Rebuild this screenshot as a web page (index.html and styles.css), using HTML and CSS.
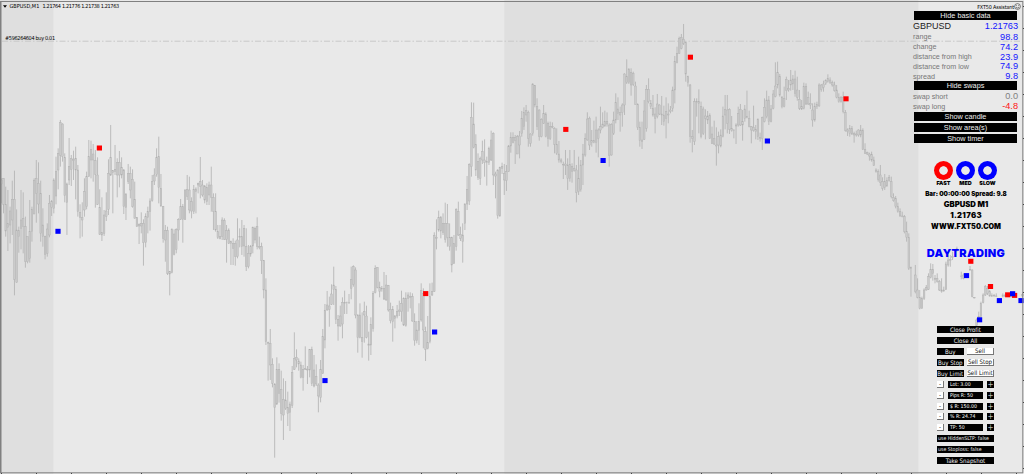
FILE: index.html
```html
<!DOCTYPE html>
<html lang="en">
<head>
    <meta charset="UTF-8">
    <meta name="viewport" content="width=device-width, initial-scale=1.0">
    <title>GBPUSD,M1</title>
    <link rel="stylesheet" href="styles.css">
</head>
<body>
    <div class="chart">
        <svg class="plot" viewBox="0 0 1024 474">
            <rect class="session" x="0" y="0" width="53.3" height="474"/>
            <rect class="session" x="504.3" y="0" width="414" height="474"/>
            <line class="order-line" x1="2" y1="41.2" x2="1022" y2="41.2"/>
            <g id="candles" transform="scale(0.33333)"></g>
            <g id="markers"></g>
            <g id="axis"></g>
        </svg>

        <div class="chart-info">
            <div class="chart-title">
                <svg class="arrow" viewBox="0 0 5 3"><path d="M0 0h5L2.5 3z"/></svg>
                <span class="symbol">GBPUSD,M1</span>
                <span class="ohlc">1.21764 1.21776 1.21738 1.21763</span>
            </div>
            <div class="order-label">#596264604 buy 0.01</div>
        </div>

        <div class="sidebar">
            <div class="expert">FXT50 Assistant
                <svg viewBox="0 0 7 7"><circle cx="3.5" cy="3.5" r="2.9"/><path d="M2.4 2.2v.9M4.6 2.2v.9M1.9 4.3q1.6 1.5 3.2 0"/></svg>
            </div>

            <div class="data">
                <button class="bar">Hide basic data</button>
                <div class="row main"><span>GBPUSD</span><b>1.21763</b></div>
                <div class="row"><span>range</span><b>98.8</b></div>
                <div class="row"><span>change</span><b>74.2</b></div>
                <div class="row"><span>distance from high</span><b>23.9</b></div>
                <div class="row"><span>distance from low</span><b>74.9</b></div>
                <div class="row"><span>spread</span><b>9.8</b></div>
                <button class="bar swaps">Hide swaps</button>
                <div class="row"><span>swap short</span><b class="zero">0.0</b></div>
                <div class="row"><span>swap long</span><b class="negative">-4.8</b></div>
                <div class="toggles">
                    <button class="bar">Show candle</button>
                    <button class="bar">Show area(s)</button>
                    <button class="bar">Show timer</button>
                </div>
            </div>

            <div class="signals">
                <div class="signal"><i class="ring red"></i>FAST</div>
                <div class="signal"><i class="ring"></i>MED</div>
                <div class="signal"><i class="ring"></i>SLOW</div>
            </div>
            <div class="summary">
                <p class="timer">Bar: 00:00:00 Spread: 9.8</p>
                <p>GBPUSD M1</p>
                <p class="price">1.21763</p>
                <p class="site">WWW.FXT50.COM</p>
            </div>
            <div class="mode">DAYTRADING</div>

            <div class="trade">
                <button>Close Profit</button>
                <button>Close All</button>
                <div class="pair"><button>Buy</button><button class="light">Sell</button></div>
                <div class="pair"><button>Buy Stop</button><button class="light">Sell Stop</button></div>
                <div class="pair"><button>Buy Limit</button><button class="light">Sell Limit</button></div>
                <div class="stepper"><button class="light">-</button><span>Lot: 3.00</span><button class="plus">+</button></div>
                <div class="stepper"><button class="light">-</button><span>Pips R: 50</span><button class="plus">+</button></div>
                <div class="stepper"><button class="light">-</button><span>$ R: 150.00</span><button class="plus">+</button></div>
                <div class="stepper"><button class="light">-</button><span>% R: 24.74</span><button class="plus">+</button></div>
                <div class="stepper"><button class="light">-</button><span>TP: 50</span><button class="plus">+</button></div>
                <button class="option">use HiddenSLTP: false</button>
                <button class="option">use Stoploss: false</button>
                <button>Take Snapshot</button>
            </div>
        </div>
    </div>

    <script src="chart.js"></script>
</body>
</html>
```
FILE: styles.css
```css
* {
    box-sizing: border-box;
}

body {
    margin: 0;
    background-color: #e9e9e9;
    font-family: "DejaVu Sans Condensed", "DejaVu Sans", sans-serif;
    color: #000;
}

.chart {
    position: relative;
    display: flex;
    justify-content: space-between;
    width: 1024px;
    height: 474px;
    overflow: hidden;
}

.plot {
    position: absolute;
    top: 0;
    left: 0;
    width: 1024px;
    height: 474px;
}

.session {
    fill: #dfdfdf;
}

.order-line {
    stroke: #c8c8c8;
    stroke-width: 1;
    stroke-dasharray: 6 2 1.5 2;
}

.wick {
    stroke: #b0b0b0;
    stroke-width: 2.4;
}

.body {
    fill: #cbcbcb;
    stroke: #b0b0b0;
    stroke-width: 1.3;
}

.sell {
    fill: #ff0000;
}

.buy {
    fill: #0000ff;
}

.frame {
    fill: #808080;
}

.tick {
    fill: #444;
}

.chart-info,
.sidebar {
    position: relative;
}

.chart-info {
    padding: 2px 0 0 3px;
    font-size: 5.5px;
    line-height: 8px;
    white-space: nowrap;
}

.chart-title {
    display: flex;
    align-items: center;
    height: 8px;
}

.arrow {
    width: 4px;
    height: 3px;
    margin-right: 2.5px;
}

.symbol {
    width: 33px;
}

.ohlc {
    letter-spacing: -0.33px;
}

.order-label {
    margin: 24px 0 0 2px;
    letter-spacing: -0.32px;
}

.sidebar {
    display: flex;
    flex-direction: column;
    width: 111px;
    padding-top: 2px;
}

button {
    display: block;
    width: 100%;
    margin: 0;
    padding: 0;
    border: 0;
    border-radius: 0;
    background-color: #000;
    color: #eee;
    font-family: inherit;
    text-align: center;
    white-space: nowrap;
}

.expert {
    display: flex;
    justify-content: flex-end;
    align-items: center;
    height: 9px;
    padding-right: 3px;
    font-size: 5.4px;
    letter-spacing: -0.13px;
    white-space: nowrap;
}

.expert svg {
    width: 7px;
    height: 7px;
    fill: none;
    stroke: #333;
    stroke-width: 0.6;
}

.data {
    width: 105px;
    font-family: "Liberation Sans", Arial, sans-serif;
}

.bar {
    width: 103px;
    height: 9px;
    margin: 0 1px;
    font-size: 7.3px;
    line-height: 9px;
}

.row {
    display: flex;
    justify-content: space-between;
    align-items: center;
    height: 9.8px;
    color: #777;
    font-size: 7.2px;
}

.row b {
    color: #1414ff;
    font-size: 9.2px;
    font-weight: normal;
}

.main {
    height: 12px;
    color: #222;
    font-size: 9px;
}

.row .zero {
    color: #808080;
}

.row .negative {
    color: #ff1414;
}

.swaps {
    margin-bottom: 1.4px;
}

.toggles {
    display: flex;
    flex-direction: column;
    gap: 2px;
    padding-top: 0.6px;
}

.signals {
    display: flex;
    gap: 3px;
    margin: 18px 0 0 21px;
    height: 26px;
}

.signal {
    display: flex;
    flex-direction: column;
    align-items: center;
    width: 19px;
    font-family: Inter, "Arial Black", sans-serif;
    font-size: 5.4px;
    font-weight: 900;
    line-height: 6px;
}

.ring {
    width: 19px;
    height: 19px;
    border-radius: 50%;
    background: radial-gradient(circle, transparent 3.9px, #0000ff 4.6px);
}

.ring.red {
    background: radial-gradient(circle, transparent 3.9px, #ff0000 4.6px);
}

.summary,
.mode {
    width: 106px;
    font-family: Inter, "Arial Black", sans-serif;
    font-weight: 900;
    text-align: center;
    white-space: nowrap;
}

.summary {
    margin-top: 1px;
}

.summary p {
    margin: 0;
    font-size: 7.7px;
    line-height: 11px;
}

.summary .timer {
    font-size: 6.15px;
}

.summary .price {
    letter-spacing: 0.3px;
}

.summary .site {
    font-size: 7.2px;
}

.mode {
    margin-top: 14px;
    color: #0000ff;
    font-size: 11px;
    line-height: 14px;
    letter-spacing: 0.3px;
}

.trade {
    display: flex;
    flex-direction: column;
    gap: 3.93px;
    width: 57px;
    margin: 66.5px 0 0 24px;
    font-size: 6px;
}

.trade button,
.trade span {
    height: 7px;
    font-size: 6.1px;
    line-height: 7px;
}

.trade .light {
    border: solid #777;
    border-width: 0 1px 1px 0;
    background-color: #fff;
    color: #111;
    line-height: 6px;
}

.pair {
    display: grid;
    grid-template-columns: 26.5px 27px;
    gap: 3.5px;
}

.stepper {
    display: grid;
    grid-template-columns: 7px 35px 7px;
    gap: 4px;
}

.trade .stepper span {
    padding-left: 2px;
    background-color: #000;
    color: #fff;
    font-size: 5.2px;
    white-space: nowrap;
}

.trade .plus {
    color: #bbb;
    font-size: 8px;
}

.trade .option {
    padding-left: 1px;
    font-size: 5.2px;
    text-align: left;
}
```
FILE: chart.js
```js
const STEP = 6.56;

// candles as [high, body top, body bottom, low], grouped by price offset
const groups = [
    { from: 0, y: 330, data: [
        [205,210,222,280],[205,205,283,310],[230,283,363,380],[240,340,352,423],[290,303,345,400],[212,268,330,375],
        [182,268,508,556],[298,360,517,518],[350,362,380,428],[240,330,355,418],[247,325,350,430],[320,350,455,473],
        [380,380,455,460],[270,365,445,458],[290,298,365,395],[205,212,312,312],[150,205,250,338],[157,220,282,310],
        [212,250,370,395],[295,345,380,410],[377,380,433,448],[340,357,430,440],[255,280,375,382],[270,275,292,318],
        [205,210,295,310],[140,185,258,283],[115,130,180,238],[30,38,136,170],[40,42,140,155],[130,142,257,277],
        [218,222,278,375],[84,170,210,225],[135,145,178,228],[122,148,152,210],[110,145,180,268],[165,180,305,320],
        [283,308,322,385],[277,322,330,380],[205,245,300,320],[185,200,290,298],[90,140,200,200],[92,118,150,205],
        [102,132,150,215],[120,152,193,293],[142,195,283,285],[238,293,373,375],[262,367,375,393],[300,315,370,378],
        [247,303,320,333],[148,190,298,315],[45,142,195,198],[180,182,188,310],[105,178,185,195],[145,158,195,262],
        [123,157,195,232],[142,172,195,205],[177,180,290,312],[250,252,293,330],[162,190,215,222],[170,190,240,265],
        [178,208,290,293],[215,268,325,325],[322,322,350,350],[340,343,348,402],[307,340,348,370],[328,340,398,467],
        [310,320,397,412],[290,305,322,370],[265,273,305,362],[195,215,272,275],[175,195,213,225],[115,143,193,200],
        [80,140,232,280],[192,235,288,290],[288,290,385,398],[345,362,390,455],[350,362,490,495],[483,485,492,556],
        [355,358,488,490],[358,372,433,436],[355,358,418,430],[325,328,360,392],[267,290,328,330],[282,290,328,398],
        [238,240,328,330],[195,238,260,270],[200,240,300,310],[262,275,303,325],[225,238,305,312],[232,237,245,310],
        [218,220,225,250],[141,215,230,265],[210,225,255,260],[225,228,270,280],[220,232,275,285],[215,225,255,285],
        [170,225,262,305],[250,262,305,360],[250,305,360,365],[345,365,383,387],[345,380,385,388],[322,330,380,390],
        [325,332,388,390],[345,362,388,458],[355,360,400,402],[392,395,400,465],[385,400,415,465],[392,400,440,467],
        [325,390,440,445],[355,380,382,412],[330,380,410,435],[345,355,408,440],[355,410,470,483],[405,430,470,475],
        [405,410,432,440],[350,352,408,430],[350,355,390,400],[322,350,410,418]
    ]},
    { from: 118, y: 540, data: [
        [170,200,203,208],[188,200,242,282],[240,242,330,355],[295,330,485,495],[485,488,490,602],[447,490,555,600],
        [535,553,610,622],[610,612,683,833],[532,568,672,675],[550,568,640,668],[572,628,700,722],[595,658,705,780],
        [603,660,685,690],[635,682,700,738],[665,672,698,753],[558,577,676,684],[457,535,568,570],[508,532,540,562],
        [535,543,552,572],[545,555,592,595],[555,568,593,632],[499,565,568,570],[558,568,570,612],[507,508,570,592],
        [500,508,610,618],[525,570,618,622],[553,590,612,618],[610,615,648,697],[540,568,653,667],[447,470,580,582],
        [372,392,480,505],[333,375,390,392],[350,378,388,440],[313,342,373,375],[260,315,328,375],[318,328,418,432],
        [405,418,438,482],[377,408,438,440],[352,367,432,475],[332,367,370,402],[365,367,368,402],[342,367,368,372],
        [260,298,325,358],[256,260,313,320],[262,270,405,415],[403,405,473,518],[370,405,473,475],[397,473,485,533],
        [365,395,405,488],[377,408,472,475],[455,492,497,542],[412,433,495,525],[333,340,445,455],[256,265,338,340],
        [262,263,322,325],[305,322,335,352],[318,325,327,335],[276,325,357,360],[285,315,360,362],[315,317,390,395],
        [368,388,422,430],[378,388,425,485],[405,408,415,445],[375,395,408,415],[362,390,395,408],[332,370,395,425],
        [352,355,435,438],[337,355,437,440],[337,345,355,395],[337,350,352,385],[340,350,423,425],[400,425,482,497],
        [423,450,482,490],[370,425,452,495],[310,332,420,425],[325,340,450,505],[440,455,508,543],[408,487,505,508],
        [310,350,485,490],[308,335,345,348],[157,167,335,336],[118,172,175,208],[92,112,150,155],[108,112,153,175],
        [100,130,158,165],[68,130,178,188],[72,130,172,200],[130,172,200,212],[170,172,255,277],[165,190,250,252],
        [85,88,200,212],[65,95,165,168],[140,163,175,183],[130,165,185,248],[70,72,130,150]
    ]},
    { from: 213, y: 150, data: [
        [378,418,462,480],[340,343,453,465],[157,202,350,380],[158,222,292,295],[253,283,360,378],[310,335,382,390],
        [320,325,385,405],[272,305,330,342],[268,330,338,380],[320,335,338,407],[290,295,337,345],[242,270,330,333],
        [247,250,375,405],[365,372,378,445],[358,360,497,506],[350,352,498,500],[338,350,355,372],[342,370,390,435],
        [345,365,392,423],[285,288,365,366],[247,262,288,308],[247,262,278,280],[255,262,272,342],[255,260,312,312],
        [243,258,285,325],[183,205,250,260],[172,188,230,240],[165,182,195,215],[182,187,265,290],[250,252,280,290],
        [100,102,250,257],[105,107,165,172],[145,170,230,240],[178,180,260,272],[205,208,260,262],[165,190,220,222],
        [187,192,260,262],[215,220,265,290],[215,230,265,270],[217,230,232,235],[232,235,283,310],[235,283,310,315],
        [273,312,330,338],[325,330,335,340],[335,343,345,387],[300,342,347,375],[325,345,385,420],[300,343,385,395],
        [340,350,365,398],[300,355,362,365],[345,360,427,457],[320,385,425,435],[330,345,418,425],[282,312,345,405],
        [250,265,315,320],[187,207,270,272],[200,205,285,300],[240,272,278,290],[212,272,277,280],[200,240,278,308],
        [235,240,265,322],[170,230,240,250],[187,222,232,235],[182,215,228,230],[187,215,222,230],[220,225,317,350],
        [220,223,315,317],[185,210,250,255],[130,157,210,220],[142,177,190,210],[170,188,195,245],[160,165,188,230],
        [70,72,165,195],[28,80,97,102],[55,57,98,102],[55,68,105,137],[65,70,103,108],[95,108,163,163],
        [160,163,233,240],[215,232,272,290],[215,270,275,297],[150,183,268,270],[105,118,235,245],[85,118,155,160],
        [150,160,170,177],[135,175,195,200],[172,192,205,250]
    ]},
    { from: 300, y: 30, data: [
        [252,282,320,325],[283,285,312,315],[258,312,315,345],[287,315,335,347],[262,305,325,385],[280,312,315,340],
        [288,300,305,310],[230,240,295,305],[138,155,240,280],[110,130,158,160],[80,85,130,132],[72,82,115,118],
        [42,88,100,105],[95,98,192,215],[197,200,218,230],[222,225,380,398],[360,380,385,427],[265,275,395,405],
        [265,275,278,320],[238,275,280,370],[275,290,380,385],[290,297,370,375],[298,318,325,388],[303,318,330,342],
        [310,317,385,387],[350,372,400,402],[332,385,402,405],[352,405,408,467],[365,380,405,430],[358,375,408,412],
        [290,318,380,382],[255,298,315,358],[255,300,340,370],[295,298,358,372],[318,355,362,365],[358,360,362,385],
        [340,345,348,402],[290,310,345,350],[282,298,345,348],[300,335,345,392],[285,297,325,335],[242,320,323,325],
        [302,325,350,352],[348,350,360,400],[287,352,362,365],[345,358,365,388],[325,328,380,390],[368,382,385,395],
        [320,322,385,420],[265,292,335,337],[242,270,320,325],[258,270,335,345],[285,297,335,337],[240,252,295,298],
        [157,228,260,262],[155,187,225,235],[192,200,255,260],[258,262,290,295],[230,265,290,292],[200,208,242,270],
        [210,235,240,245],[180,210,225,242],[195,207,222,240],[182,207,250,260],[200,240,262,272],[240,268,295,300],
        [270,290,297,300],[218,230,295,298],[220,230,282,285],[245,262,282,285],[250,280,285,297],[280,300,330,350],
        [278,290,330,335],[275,283,290,297],[220,225,288,290],[222,225,238,245],[212,222,232,245],[208,212,220,225],
        [193,205,215,218],[202,210,218,222],[212,218,225,230],[215,225,242,245],[225,240,262,265],[250,262,275,278],
        [258,262,275,278],[245,262,305,310],[300,308,362,365],[355,360,365,378],[345,355,370,380],[348,355,372,375],
        [365,370,375,398],[362,372,375,380]
    ]},
    { from: 392, y: 180, data: [
        [208,210,225,230],[195,210,225,232],[205,212,268,270],[250,268,280,282],[275,278,282,285],[278,282,288,302],
        [275,283,300,305],[290,300,317,318],[325,330,335,338],[328,335,358,365],[315,345,368,378],[352,365,385,392],
        [342,365,382,390],[352,362,378,380],[345,352,362,365],[350,365,410,415],[400,412,422,425],[408,415,440,445],
        [428,440,455,458],[445,455,468,470],[455,468,470,472],[465,470,515,520],[485,515,532,545],[520,532,625,630],
        [620,622,626,710],null,[615,645,695,700],[655,690,712,715],[690,712,745,748],[710,715,745,746],
        [685,690,715,720],[675,683,690,692],[640,650,688,690],[610,628,652,655],[612,628,640,662],[645,655,658,670],
        [640,655,665,668],[660,665,690,693],[655,690,695,698],[680,690,693,695],[605,612,688,690],[575,600,615,620],
        [585,598,602,620],[575,590,593,600],null,[560,565,570,575],null,[635,648,650,658],[640,645,655,658],
        null,null,[618,628,630,632],[628,630,710,712],[712,713,714,715],[775,780,797,800],[755,770,780,782],
        [725,730,770,775],[700,705,728,730],[675,680,705,708],[678,685,700,705],[690,695,708,710],[700,707,709,710],
        [702,706,708,710],[700,708,709,710],null,null,[700,705,710,712],[702,706,709,710],null,null,
        [700,706,709,712],null,null,null,null,[698,704,708,712]
    ]}
];

const markers = [
    ['buy', 58, 231.3], ['sell', 99.4, 148], ['buy', 325, 380.6], ['sell', 425.7, 293.6], ['buy', 434.6, 332],
    ['sell', 565.8, 129.4], ['buy', 603.1, 160.5], ['sell', 690.4, 57.2], ['buy', 767.4, 141], ['sell', 846, 98.8],
    ['sell', 970.8, 261.3], ['buy', 966.5, 275.6], ['sell', 990.5, 286.5], ['buy', 999.4, 300.6], ['sell', 1007.7, 294.8],
    ['sell', 1014.6, 295.4], ['buy', 1012.6, 293.7], ['buy', 1021, 300.6], ['buy', 979.6, 319.8]
];

function add(parent, tag, attrs) {
    const el = document.createElementNS('http://www.w3.org/2000/svg', tag);
    for (const key in attrs) el.setAttribute(key, attrs[key]);
    parent.appendChild(el);
}

const candles = document.getElementById('candles');
groups.forEach(group => {
    group.data.forEach((c, i) => {
        if (!c) return;
        const x = 4 + (group.from + i) * STEP;
        const [high, top, bottom, low] = c.map(v => v + group.y);
        add(candles, 'line', { class: 'wick', x1: x, x2: x, y1: high, y2: low });
        add(candles, 'rect', { class: 'body', x: x - 2.4, y: top, width: 4.8, height: Math.max(1, bottom - top) });
    });
});

const markerLayer = document.getElementById('markers');
markers.forEach(([type, x, y]) => {
    add(markerLayer, 'rect', { class: type, x: x - 2.6, y: y - 2.5, width: 5.2, height: 5 });
});

const axis = document.getElementById('axis');
add(axis, 'rect', { class: 'frame', x: 0, y: 1, width: 1023, height: 1 });
add(axis, 'rect', { class: 'frame', x: 0, y: 1, width: 1.5, height: 472 });
add(axis, 'rect', { class: 'frame', x: 1022.3, y: 1, width: 1, height: 472 });
add(axis, 'rect', { class: 'frame', x: 0, y: 472.3, width: 1023, height: 1 });
for (let x = 1.5; x < 1022; x += 35) {
    add(axis, 'rect', { class: 'tick', x: x - 0.5, y: 473, width: 1, height: 1 });
}
for (let y = 6; y < 472; y += 22) {
    add(axis, 'rect', { class: 'tick', x: 1023, y: y, width: 1, height: 1 });
}
```
